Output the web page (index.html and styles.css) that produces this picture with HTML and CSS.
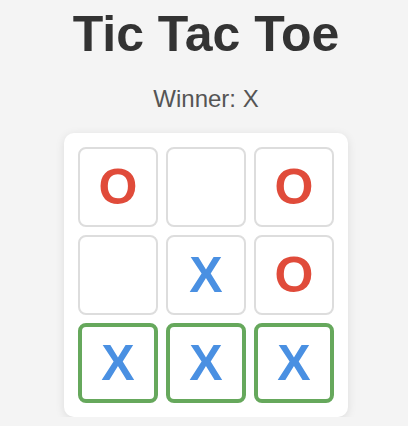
FILE: index.html
```html
<!DOCTYPE html>
<html lang="en">
<head>
<meta charset="utf-8">
<title>Tic Tac Toe</title>
<link rel="stylesheet" href="styles.css">
</head>
<body>
  <main class="game">
    <h1 class="title">Tic Tac Toe</h1>
    <p class="status">Winner: X</p>
    <div class="board">
      <div class="cell o">O</div>
      <div class="cell"></div>
      <div class="cell o">O</div>
      <div class="cell"></div>
      <div class="cell x">X</div>
      <div class="cell o">O</div>
      <div class="cell x win">X</div>
      <div class="cell x win">X</div>
      <div class="cell x win">X</div>
    </div>
  </main>
</body>
</html>
```
FILE: styles.css
```css
html, body {
  margin: 0;
  background: #f4f4f4;
  font-family: "Liberation Sans", Arial, sans-serif;
}

.game {
  display: flex;
  flex-direction: column;
  align-items: center;
  padding: 5px 0 0 4px;
}

.title {
  margin: 0 0 22px;
  font-size: 50px;
  font-weight: bold;
  color: #333;
}

.status {
  margin: 0 0 20px;
  font-size: 24px;
  color: #555;
}

.board {
  display: grid;
  grid-template-columns: repeat(3, 80px);
  grid-auto-rows: 80px;
  gap: 8px;
  padding: 14px;
  background: #fff;
  border-radius: 10px;
  box-shadow: 0 2px 10px rgba(0, 0, 0, 0.1);
}

.cell {
  box-sizing: border-box;
  display: flex;
  align-items: center;
  justify-content: center;
  border: 2px solid #ddd;
  border-radius: 8px;
  background: #fff;
  font-size: 50px;
  font-weight: bold;
}

.cell.x { color: #4a90e2; }
.cell.o { color: #e04b3a; }

.cell.win {
  border: 4px solid #66a85c;
}
```
